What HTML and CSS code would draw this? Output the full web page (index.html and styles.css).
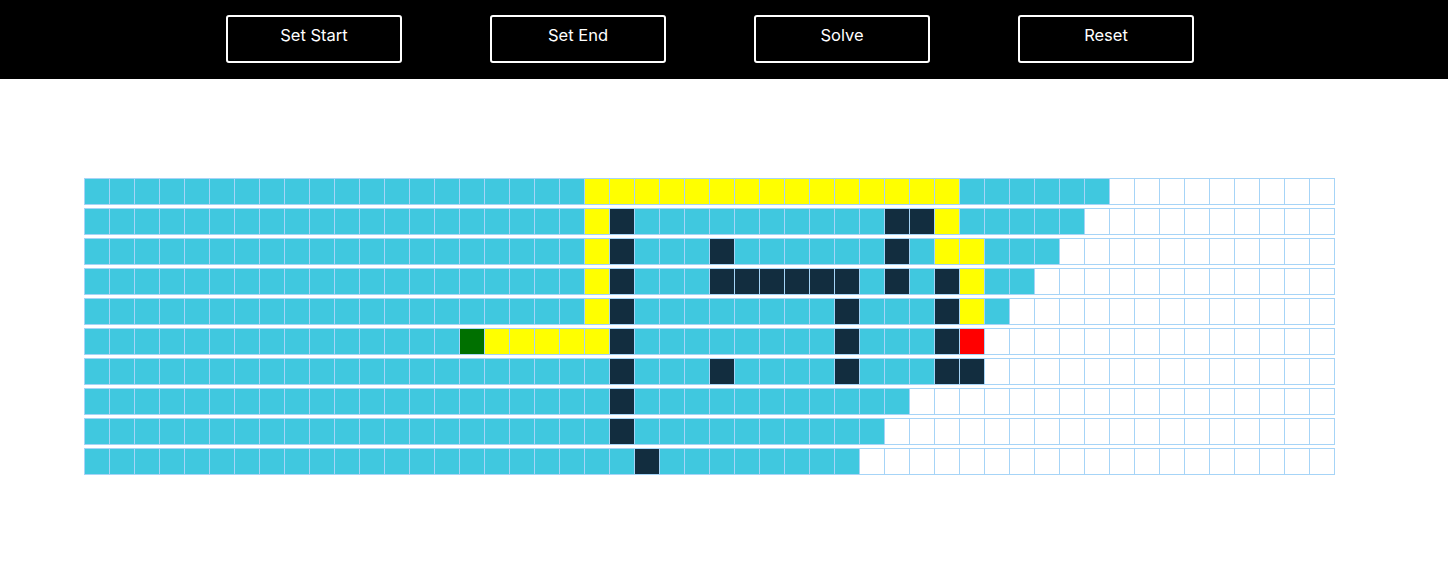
FILE: index.html
```html
<!DOCTYPE html>
<html lang="en">
<head>
  <meta charset="UTF-8">
  <meta name="viewport" content="width=device-width, initial-scale=1.0">
  <title>Maze Solver</title>
  <link rel="stylesheet" href="styles.css">
</head>
<body>
  <div class="toolbar">
    <button class="tool-btn">Set Start</button>
    <button class="tool-btn">Set End</button>
    <button class="tool-btn">Solve</button>
    <button class="tool-btn">Reset</button>
  </div>

  <div id="grid" class="grid"></div>

  <script>
    // c = visited, d = wall, y = path, g = start, r = end, . = empty
    const rows = [
      'cccccccccccccccccccc' + 'yyyyyyyyyyyyyyy' + 'cccccc' + '.........',
      'cccccccccccccccccccc' + 'yd' + 'cccccccccc' + 'dd' + 'y' + 'ccccc' + '..........',
      'cccccccccccccccccccc' + 'yd' + 'ccc' + 'd' + 'cccccc' + 'd' + 'c' + 'yy' + 'ccc' + '...........',
      'cccccccccccccccccccc' + 'yd' + 'ccc' + 'dddddd' + 'c' + 'd' + 'c' + 'd' + 'y' + 'cc' + '............',
      'cccccccccccccccccccc' + 'yd' + 'cccccccc' + 'd' + 'ccc' + 'd' + 'y' + 'c' + '.............',
      'ccccccccccccccc' + 'g' + 'yyyyy' + 'd' + 'cccccccc' + 'd' + 'ccc' + 'd' + 'r' + '..............',
      'ccccccccccccccccccccc' + 'd' + 'ccc' + 'd' + 'cccc' + 'd' + 'ccc' + 'dd' + '..............',
      'ccccccccccccccccccccc' + 'd' + 'ccccccccccc' + '.................',
      'ccccccccccccccccccccc' + 'd' + 'cccccccccc' + '..................',
      'cccccccccccccccccccccc' + 'd' + 'cccccccc' + '...................'
    ];

    const names = { c: 'visited', d: 'wall', y: 'path', g: 'start', r: 'end', '.': '' };
    const grid = document.getElementById('grid');

    rows.forEach(row => {
      const rowEl = document.createElement('div');
      rowEl.className = 'row';
      for (const ch of row) {
        const cell = document.createElement('div');
        cell.className = 'cell ' + names[ch];
        rowEl.appendChild(cell);
      }
      grid.appendChild(rowEl);
    });
  </script>
</body>
</html>
```

FILE: styles.css
```css
body {
  margin: 0;
  font-family: Inter, "Noto Sans", sans-serif;
  background-color: #fff;
}

.toolbar {
  background-color: #000;
  height: 79px;
  display: flex;
  align-items: flex-start;
  gap: 88px;
  padding-left: 226px;
  box-sizing: border-box;
  padding-top: 15px;
}

.tool-btn {
  width: 176px;
  height: 48px;
  background-color: #000;
  color: #fff;
  border: 2px solid #fff;
  border-radius: 3px;
  font-family: Inter, "Noto Sans", sans-serif;
  font-size: 16.5px;
  line-height: 20px;
  padding: 8px 0 0;
  display: flex;
  justify-content: center;
  align-items: flex-start;
  cursor: pointer;
}

.grid {
  padding: 99px 0 0 84px;
}

.row {
  display: flex;
  margin-bottom: 3px;
}

.cell {
  width: 26px;
  height: 27px;
  box-sizing: border-box;
  border: 1px solid #a6d4f7;
  margin-left: -1px;
  background-color: #fff;
}

.cell:first-child {
  margin-left: 0;
}

.cell.visited {
  background-color: #40c8df;
}

.cell.wall {
  background-color: #122d3f;
}

.cell.path {
  background-color: #ffff00;
}

.cell.start {
  background-color: #007000;
}

.cell.end {
  background-color: #ff0000;
}
```
